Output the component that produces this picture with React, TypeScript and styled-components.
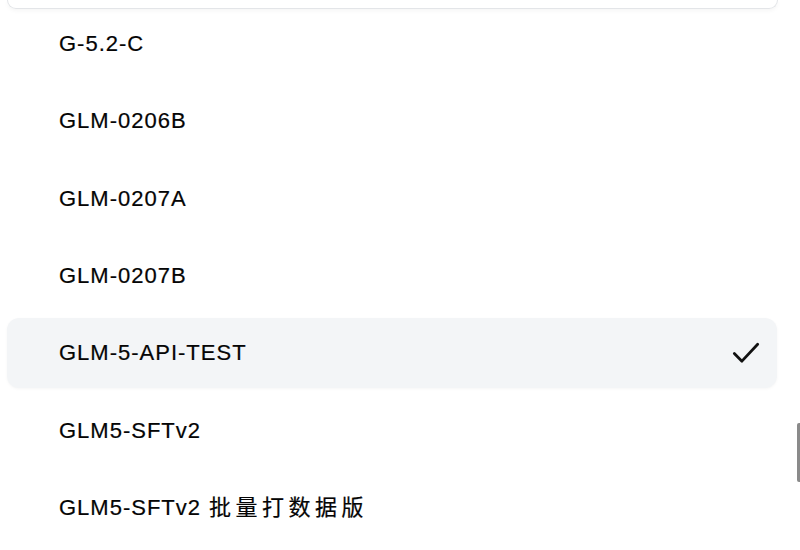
import { FC } from 'react';
import styled, { createGlobalStyle } from 'styled-components';

const models = [
  { name: 'G-5.2-C' },
  { name: 'GLM-0206B' },
  { name: 'GLM-0207A' },
  { name: 'GLM-0207B' },
  { name: 'GLM-5-API-TEST', selected: true },
  { name: 'GLM5-SFTv2' },
  { name: 'GLM5-SFTv2', extra: '批量打数据版' },
];

const GlobalStyle = createGlobalStyle`
  html, body {
    margin: 0;
    padding: 0;
    background: #ffffff;
    overflow: hidden;
  }
  body {
    font-family: "Liberation Sans", "Noto Sans CJK SC", sans-serif;
    color: #050505;
  }
`;

const App: FC = () => (
  <Page>
    <GlobalStyle />
    <CardEdge />
    <List>
      { models.map((x, i) => (
        <Row key={ i } $selected={ x.selected }>
          <Label>
            { x.name }
            { x.extra && <Extra>{ x.extra }</Extra> }
          </Label>
          { x.selected && (
            <Check viewBox='0 0 24 24'>
              <path d='M2 12.5 L8.5 19 L22 4.5' />
            </Check>
          ) }
        </Row>
      )) }
    </List>
    <ScrollThumb />
  </Page>
);

const Page = styled.div`
  position: relative;
  width: 800px;
  height: 550px;
  overflow: hidden;
  background: #ffffff;
`;

const CardEdge = styled.div`
  height: 8px;
  margin: 0 22px 0 7px;
  border: 1px solid #e3e5e8;
  border-top: none;
  border-radius: 0 0 12px 12px;
  box-shadow: 0 2px 4px rgba(0, 0, 0, 0.04);
`;

const List = styled.div`
  display: flex;
  flex-direction: column;
  gap: 7.33px;
  padding: 0 23px 0 7px;
`;

interface RowProps {
  $selected?: boolean;
}

const Row = styled.div<RowProps>`
  display: flex;
  align-items: center;
  justify-content: space-between;
  height: 70px;
  padding: 0 17px 0 52px;
  border-radius: 12px;
  background: ${ props => props.$selected ? '#f3f5f7' : 'transparent' };
  box-shadow: ${ props => props.$selected ? '0 1px 3px rgba(0, 0, 0, 0.04)' : 'none' };
`;

const Label = styled.span`
  font-size: 22px;
  letter-spacing: 1px;
  line-height: 1;
  white-space: nowrap;
  -webkit-text-stroke: 0.2px #050505;
`;

const Extra = styled.span`
  margin-left: 8px;
  letter-spacing: 4.5px;
`;

const Check = styled.svg`
  width: 28px;
  height: 28px;
  fill: none;
  stroke: #111111;
  stroke-width: 2.4;
  stroke-linecap: round;
  stroke-linejoin: round;
`;

const ScrollThumb = styled.div`
  position: absolute;
  right: 0;
  top: 423px;
  width: 3px;
  height: 59px;
  border-radius: 2px 0 0 2px;
  background: #8a8a8a;
`;

export default App;
